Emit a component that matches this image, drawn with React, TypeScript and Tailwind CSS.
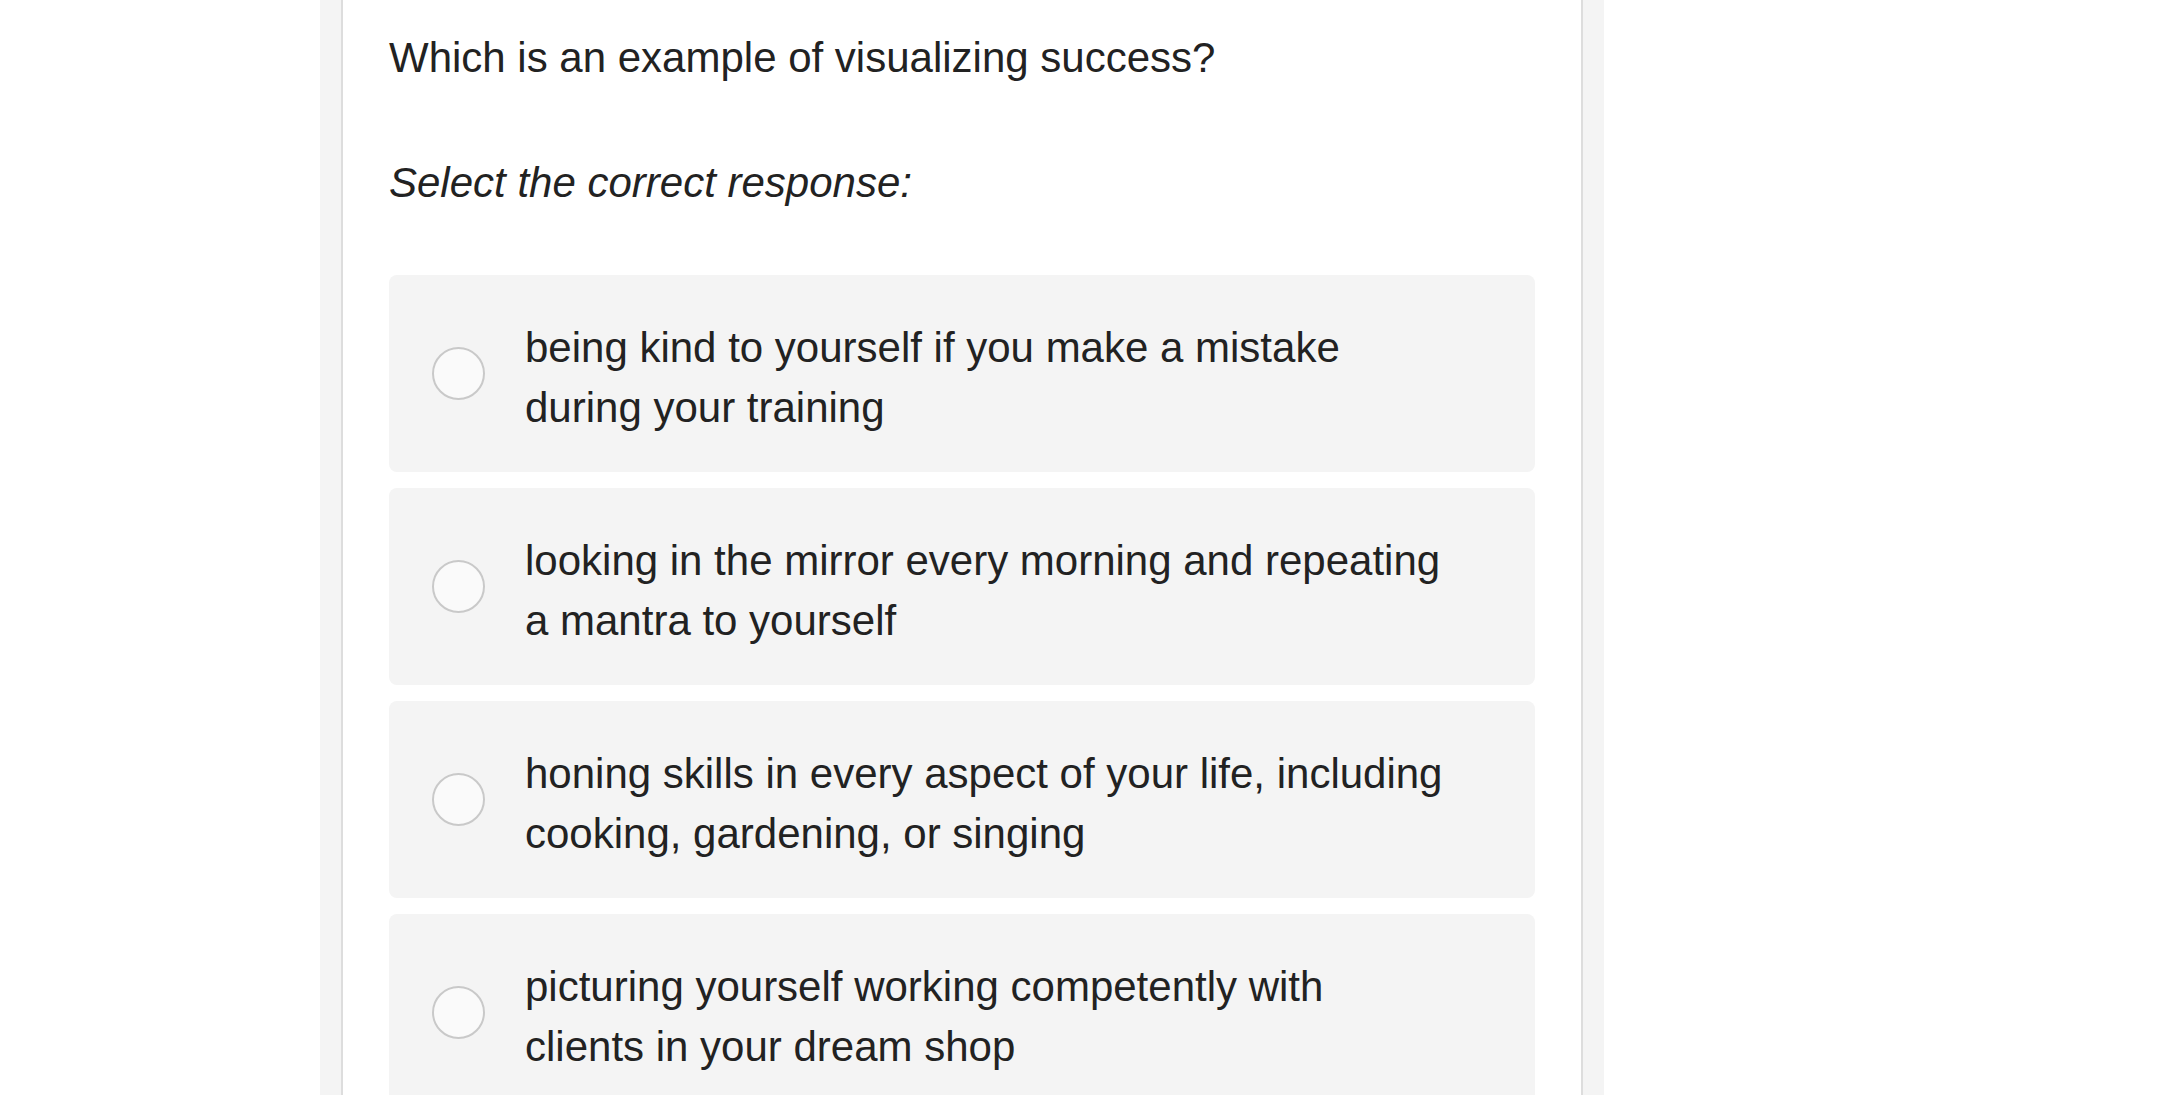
import React from "react";

/* quiz question with four radio choices */
interface Choice {
  id: string;
  lines: string[];
}

const CHOICES: Choice[] = [
  { id: "a", lines: ["being kind to yourself if you make a mistake", "during your training"] },
  { id: "b", lines: ["looking in the mirror every morning and repeating", "a mantra to yourself"] },
  { id: "c", lines: ["honing skills in every aspect of your life, including", "cooking, gardening, or singing"] },
  { id: "d", lines: ["picturing yourself working competently with", "clients in your dream shop"] },
];

const FONT = { fontFamily: '"Liberation Sans", Arial, sans-serif' };

const ChoiceRow = ({ c }: { c: Choice }) => (
  <label className="flex h-[197px] cursor-pointer items-center rounded-lg bg-[#f4f4f4] pl-[43px] pr-8">
    <input type="radio" name="answer" value={c.id} className="sr-only" />
    <span className="h-[53px] w-[53px] shrink-0 rounded-full border-2 border-[#c9c9c9] bg-[#fafafa]" />
    <span className="ml-[40px] pt-[9px] text-[42px] leading-[60px] text-[#222]">
      {c.lines.map(l => (
        <span key={l} className="block whitespace-nowrap">{l}</span>
      ))}
    </span>
  </label>
);

export default function App() {
  return (
    <div className="min-h-screen bg-white" style={FONT}>
      <div className="ml-[320px] min-h-screen w-[1284px] bg-[#f4f4f4] px-[21px]">
        <div className="min-h-screen border-x-2 border-[#dddddd] bg-white px-[46px] pt-[30px] pb-12">
          <p className="text-[42px] leading-[55px] text-[#222]">
            Which is an example of visualizing success?
          </p>
          <p className="mt-[70px] text-[42px] italic leading-[55px] text-[#222]">
            Select the correct response:
          </p>

          <div className="mt-[65px] flex flex-col gap-[16px]">
            {CHOICES.map(c => (
              <ChoiceRow key={c.id} c={c} />
            ))}
          </div>
        </div>
      </div>
    </div>
  );
}
